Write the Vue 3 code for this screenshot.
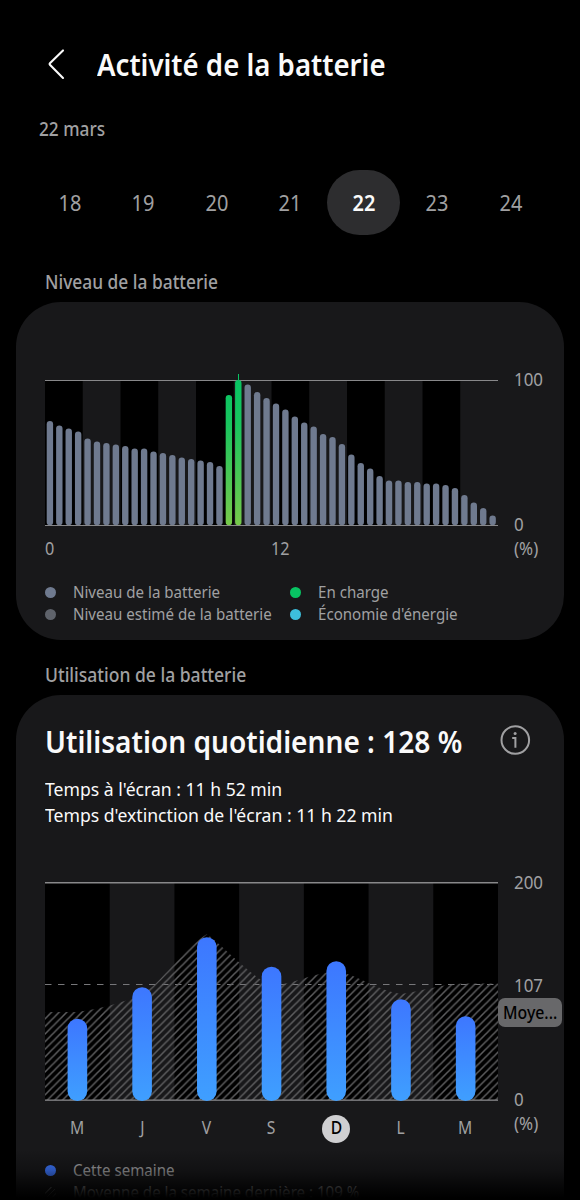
<template>
  <div class="page">
    <header class="topbar">
      <svg class="back" width="18" height="32" viewBox="0 0 18 32">
        <path d="M16 2.4 L2.9 15.3 Q2.2 16 2.9 16.7 L16 30" />
      </svg>
      <h1 class="title"><span class="t">Activité de la batterie</span></h1>
    </header>

    <div class="date"><span class="t">22 mars</span></div>

    <nav class="days">
      <button v-for="day in days" :key="day" class="day" :class="{ active: day === selectedDay }" @click="selectedDay = day">
        <span>{{ day }}</span>
      </button>
    </nav>

    <h2 class="section"><span class="t">Niveau de la batterie</span></h2>
    <section class="card level-card">
      <div class="chart-row">
        <svg class="plot" width="453" height="153" viewBox="0 -7 453 153">
          <defs>
            <linearGradient id="charge" gradientUnits="userSpaceOnUse" x1="0" y1="0" x2="0" y2="145">
              <stop offset="0" stop-color="#08c463" />
              <stop offset="0.3" stop-color="#18c55e" />
              <stop offset="1" stop-color="#77c94b" />
            </linearGradient>
          </defs>
          <rect v-for="i in 6" :key="i" class="band" :x="(i - 1) * 75.5" y="1" width="37.75" height="144" />
          <rect class="grid" x="0" y="0" width="453" height="1" />
          <rect class="grid" x="0" y="145" width="453" height="1" />
          <rect class="spike" x="193" y="-6" width="1" height="8" />
          <rect
            v-for="(top, i) in levels"
            :key="'l' + i"
            :class="i === 19 || i === 20 ? 'charging' : 'level'"
            :x="1.7 + i * 9.42"
            :y="top"
            width="6.4"
            :height="145.3 - top"
            rx="3.2"
          />
        </svg>
        <div class="scale level-scale">
          <span class="t">100</span>
          <span class="t">0</span>
        </div>
      </div>
      <div class="axis">
        <span class="a0"><span class="t">0</span></span>
        <span class="a12"><span class="t">12</span></span>
        <span class="t unit">(%)</span>
      </div>
      <ul class="legend">
        <li v-for="item in legend" :key="item.label">
          <i class="dot" :class="item.kind"></i>
          <span class="t">{{ item.label }}</span>
        </li>
      </ul>
    </section>

    <h2 class="section second"><span class="t">Utilisation de la batterie</span></h2>
    <section class="card usage-card">
      <div class="headline">
        <h3><span class="t">Utilisation quotidienne : 128 %</span></h3>
        <svg class="info" width="32" height="32" viewBox="0 0 32 32">
          <circle cx="16.3" cy="16" r="13.8" />
          <path d="M13.2 14 H16.4 V23.8" />
          <circle class="info-dot" cx="16.1" cy="9.5" r="1.5" />
        </svg>
      </div>
      <p class="times"><span class="t">Temps à l'écran : 11 h 52 min</span></p>
      <p class="times"><span class="t">Temps d'extinction de l'écran : 11 h 22 min</span></p>

      <div class="chart-row usage-row">
        <svg class="plot" width="453" height="220" viewBox="0 0 453 220">
          <defs>
            <pattern id="hatch" width="7.6" height="7.6" patternUnits="userSpaceOnUse">
              <path d="M-1.9 1.9 L1.9 -1.9 M-1 8.6 L8.6 -1 M5.7 9.5 L9.5 5.7" stroke="#5e5e60" stroke-width="1.5" />
            </pattern>
            <linearGradient id="usage" x1="0" y1="0" x2="0" y2="1">
              <stop offset="0" stop-color="#3d77ff" />
              <stop offset="1" stop-color="#3f9fff" />
            </linearGradient>
          </defs>
          <rect v-for="i in 4" :key="i" class="band" :x="(i - 1) * 129.43" y="1" width="64.71" height="217" />
          <path class="avg-line" d="M0 102.5 H453" />
          <path
            fill="url(#hatch)"
            d="M0 130 H32 C54 127.5 76 120.5 97 113 C119 98 140 65 162 52 C183 69 205 93 226 104 C248 102 269 91 291 89 C313 93 334 109 356 112 C378 109 399 101.5 421 101.5 H453 V218 H0 Z"
          />
          <rect class="grid" x="0" y="0" width="453" height="1.5" />
          <rect class="grid" x="0" y="217.5" width="453" height="1.3" />
          <rect
            v-for="(top, i) in usage"
            :key="'u' + i"
            fill="url(#usage)"
            :x="22.6 + i * 64.71"
            :y="top"
            width="19.6"
            :height="219 - top"
            rx="9.8"
          />
        </svg>
        <div class="scale usage-scale">
          <span class="t">200</span>
          <span class="t mid">107</span>
          <span class="t">0</span>
          <div class="badge"><span class="t">Moye...</span></div>
        </div>
      </div>
      <div class="weekdays">
        <span v-for="(d, i) in weekdays" :key="i" class="weekday" :class="{ active: i === 4 }">
          <span>{{ d }}</span>
        </span>
        <span class="t unit">(%)</span>
      </div>
      <ul class="legend week">
        <li>
          <i class="dot week-dot"></i>
          <span class="t">Cette semaine</span>
        </li>
        <li>
          <i class="dot hatch-dot"></i>
          <span class="t">Moyenne de la semaine dernière : 109 %</span>
        </li>
      </ul>
    </section>
    <div class="fade"></div>
  </div>
</template>

<script setup>
import { ref } from 'vue'

const days = [18, 19, 20, 21, 22, 23, 24]
const selectedDay = ref(22)

// Top edge of each half-hour bar, in chart units (0 = 100 %, 145 = 0 %)
const levels = [
  41, 45.5, 48.5, 51.5, 58.5, 61.5, 63, 64.5, 66, 68.5, 68.5, 71.5,
  73, 75, 77.5, 79, 80.5, 82, 86, 15, 0, 4.5, 12, 18,
  23.5, 29.5, 36.5, 42.5, 46.5, 54, 57, 64, 74.5, 83, 88.5, 96,
  100.5, 100.5, 102, 102, 103.5, 103.5, 105, 108, 115, 122.5, 128, 135.5
]

const legend = [
  { label: 'Niveau de la batterie', kind: 'level-dot' },
  { label: 'En charge', kind: 'charge-dot' },
  { label: 'Niveau estimé de la batterie', kind: 'estimate-dot' },
  { label: "Économie d'énergie", kind: 'saver-dot' }
]

const weekdays = ['M', 'J', 'V', 'S', 'D', 'L', 'M']
const usage = [136.7, 105.2, 55.2, 84.7, 79.2, 117.2, 134.2]
</script>

<style>
body {
  background: #000;
}
</style>

<style scoped>
.page {
  position: relative;
  width: 580px;
  height: 1200px;
  overflow: hidden;
  background: #000;
  color: #a0a0a2;
  font-family: "Noto Sans", "Open Sans", sans-serif;
}

h1,
h2,
h3,
p,
ul {
  margin: 0;
  padding: 0;
  font-weight: 400;
}

/* narrow the letterforms without touching their height */
.t {
  display: inline-block;
  white-space: nowrap;
  transform: scaleX(0.9);
  transform-origin: left center;
}

.topbar {
  display: flex;
  align-items: center;
  height: 32px;
  padding: 48px 0 0 47px;
}

.back {
  fill: none;
  stroke: #fafafa;
  stroke-width: 2.1;
  stroke-linecap: round;
}

.title {
  margin-left: 32px;
  font-size: 30.5px;
  line-height: 32px;
  font-weight: 600;
  color: #fafafa;
}

.title .t {
  transform: scaleX(0.905);
}

.date {
  margin-top: 35px;
  padding-left: 39px;
  font-size: 19.5px;
  line-height: 28px;
  font-weight: 500;
}

.date .t {
  transform: scaleX(0.885);
}

.days {
  display: flex;
  margin: 27px 0 0 32.5px;
}

.day {
  width: 73.5px;
  height: 65px;
  padding: 0 0 0 1px;
  border: 0;
  border-radius: 33px;
  background: transparent;
  color: #a0a0a2;
  font-family: inherit;
  font-size: 21px;
}

.day span {
  display: inline-block;
  transform: scaleX(0.95);
}

.day.active {
  background: #2d2d2f;
  color: #fafafa;
  font-weight: 600;
}

.section {
  margin-top: 33px;
  padding-left: 45px;
  height: 34px;
  font-size: 19.5px;
  line-height: 27px;
  font-weight: 500;
}

.section .t {
  transform: scaleX(0.89);
}

.section.second {
  margin-top: 21px;
}

.section.second .t {
  transform: scaleX(0.898);
}

.card {
  width: 548px;
  margin-left: 16px;
  box-sizing: border-box;
  background: #18181a;
  border-radius: 45px;
}

.level-card {
  height: 338px;
  padding: 71px 0 0 29px;
}

.chart-row {
  display: flex;
}

.plot {
  display: block;
  flex: none;
}

.band {
  fill: #000;
}

.grid {
  fill: #88888a;
}

.level {
  fill: #6f7a8f;
}

.charging {
  fill: url(#charge);
}

.spike {
  fill: #08c463;
}

.avg-line {
  fill: none;
  stroke: #77777a;
  stroke-width: 1.2;
  stroke-dasharray: 6.5 6.5;
}

.scale {
  position: relative;
  display: flex;
  flex-direction: column;
  align-items: flex-start;
  justify-content: space-between;
  margin-left: 16px;
  font-size: 18px;
  line-height: 20px;
}

.scale .t,
.unit {
  transform: scaleX(0.94);
}

.level-scale {
  height: 165px;
  margin-top: -4px;
}

.axis {
  display: flex;
  margin-top: 3px;
  font-size: 18px;
  line-height: 22px;
}

.a0 {
  width: 226px;
}

.a12 {
  width: 243px;
}

.legend {
  display: grid;
  grid-template-columns: 245px 1fr;
  margin-top: 22px;
  list-style: none;
  font-size: 16.5px;
  line-height: 22px;
}

.legend li {
  display: flex;
  align-items: center;
}

.legend .t {
  transform: scaleX(0.915);
}

.dot {
  flex: none;
  width: 11px;
  height: 11px;
  margin-right: 17px;
  border-radius: 50%;
}

.level-dot {
  background: #6f7a8f;
}

.charge-dot {
  background: #08c463;
}

.estimate-dot {
  background: #5f636b;
}

.saver-dot {
  background: #3dbfdc;
}

.usage-card {
  height: 560px;
  padding: 28px 0 0 29px;
}

.headline {
  display: flex;
  height: 52px;
}

.headline h3 {
  width: 454px;
  font-size: 31px;
  line-height: 37px;
  font-weight: 600;
  color: #fafafa;
}

.headline .t {
  transform: scaleX(0.906);
}

.info {
  margin-top: 1px;
  fill: none;
  stroke: #a0a0a2;
  stroke-width: 2;
}

.info .info-dot {
  fill: #a0a0a2;
  stroke: none;
}

.times {
  height: 25.5px;
  font-size: 18.5px;
  line-height: 28px;
  color: #fafafa;
}

.times .t {
  transform: scaleX(0.951);
}

.usage-row {
  margin-top: 56px;
}

.usage-scale {
  height: 238px;
  margin-top: -10px;
  margin-bottom: -8px;
  justify-content: flex-start;
}

.usage-scale .mid {
  margin: 83px 0 94px;
}

.badge {
  position: absolute;
  left: -16px;
  top: 125.5px;
  width: 64px;
  height: 29px;
  box-sizing: border-box;
  padding-left: 5px;
  border-radius: 7px;
  background: #68686a;
  color: #000;
  line-height: 29px;
  font-weight: 500;
}

.badge .t {
  transform: scaleX(0.88);
}

.weekdays {
  display: flex;
  font-size: 18px;
  line-height: 24px;
}

.weekday {
  width: 28px;
  height: 28px;
  margin: 13px 18.35px 0;
  text-align: center;
}

.weekday span {
  display: inline-block;
  transform: scaleX(0.87);
}

.weekday.active {
  border-radius: 50%;
  background: #cfcfd1;
  color: #000;
  font-weight: 500;
}

.weekdays .unit {
  margin: 9px 0 0 16px;
}

.week {
  display: block;
  margin-top: 16px;
}

.week-dot {
  background: #3d77ff;
}

.hatch-dot {
  background: repeating-linear-gradient(135deg, #5c5c5e 0 1px, transparent 1px 4px);
}

/* bottom of the scroll area dissolves into the navigation bar */
.fade {
  position: absolute;
  left: 0;
  bottom: 0;
  width: 100%;
  height: 50px;
  background: linear-gradient(rgba(0, 0, 0, 0), rgba(0, 0, 0, 0.28) 40%, rgba(0, 0, 0, 0.75) 75%, #000 96%);
}
</style>
